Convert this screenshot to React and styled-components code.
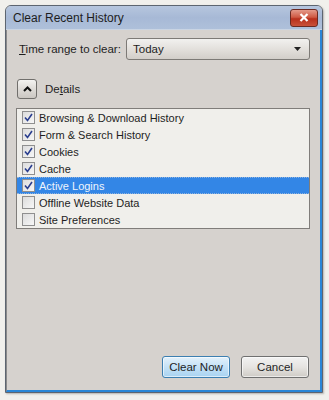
import styled, { createGlobalStyle } from "styled-components";

const GlobalStyle = createGlobalStyle`
  html, body {
    margin: 0;
    padding: 0;
    background: #f1f0ec;
  }
  body {
    font-family: "Liberation Sans", Arial, sans-serif;
    font-size: 12px;
    color: #1e1e1e;
  }
`;

const Page = styled.div`
  width: 329px;
  height: 400px;
  padding: 5px 6px 7px 5px;
  box-sizing: border-box;
  display: flex;
`;

const Window = styled.div`
  flex: 1;
  display: flex;
  flex-direction: column;
  border: 1px solid #5d6570;
  border-radius: 6px 6px 0 0;
  overflow: hidden;
  background: #d6d2ce;
  box-shadow: 1px 1px 2px rgba(0, 0, 0, 0.25);
`;

const TitleBar = styled.div`
  height: 23px;
  display: flex;
  align-items: center;
  justify-content: space-between;
  padding: 0 4px 0 7px;
  background: linear-gradient(#b6c6de, #a7b9d6 50%, #aec0da);
  border-bottom: 1px solid #c9d4e3;
`;

const Title = styled.span`
  font-size: 12px;
  color: #1d1d1d;
`;

const CloseButton = styled.div`
  width: 26px;
  height: 16px;
  border-radius: 3px;
  border: 1px solid #6b2a22;
  background: linear-gradient(#e49a8a, #cf5a44 45%, #b8301c 55%, #c9513a);
  display: flex;
  align-items: center;
  justify-content: center;
`;

const Body = styled.div`
  flex: 1;
  display: flex;
  flex-direction: column;
  padding: 8px 10px 12px 9px;
  border-right: 2px solid #2a86d6;
  border-bottom: 2px solid #2a86d6;
  border-left: 1px solid #8a8a8a;
`;

const RangeRow = styled.div`
  display: flex;
  align-items: center;
  padding-left: 3px;
`;

const Label = styled.span`
  font-size: 11.5px;
  white-space: nowrap;
`;

const Select = styled.div`
  width: 184px;
  height: 22px;
  box-sizing: border-box;
  border: 1px solid #7d7a76;
  border-radius: 3px;
  background: linear-gradient(#f2f1ef, #e3e0dc 50%, #d2cec9);
  display: flex;
  align-items: center;
  justify-content: space-between;
  padding: 0 8px 0 6px;
  margin-left: auto;
  font-size: 11.5px;
`;

const DetailsRow = styled.div`
  display: flex;
  align-items: center;
  gap: 8px;
  margin-top: 19px;
  padding-left: 1px;
`;

const ToggleButton = styled.div`
  width: 20px;
  height: 20px;
  box-sizing: border-box;
  border: 1px solid #716f6c;
  border-radius: 3px;
  background: linear-gradient(#f4f3f1, #dedbd7 50%, #cbc7c2);
  display: flex;
  align-items: center;
  justify-content: center;
`;

const List = styled.div`
  margin-top: 9px;
  height: 119px;
  border: 1px solid #807d7a;
  background: #f0efeb;
`;

const Row = styled.div`
  height: 17px;
  box-sizing: border-box;
  display: flex;
  align-items: center;
  gap: 4px;
  padding-left: 5px;
  font-size: 11px;
  color: ${(p) => (p.$selected ? "#eef4fc" : "#1e1e1e")};
  background: ${(p) => (p.$selected ? "#3386e6" : "transparent")};
  border-top: 1px dotted ${(p) => (p.$selected ? "#8fb2dc" : "transparent")};
  border-bottom: 1px dotted ${(p) => (p.$selected ? "#8fb2dc" : "transparent")};
`;

const Box = styled.div`
  width: 13px;
  height: 13px;
  box-sizing: border-box;
  border: 1px solid #8f8f8f;
  background: linear-gradient(135deg, #dcdcdc, #f7f7f7);
  display: flex;
  align-items: center;
  justify-content: center;
`;

const Footer = styled.div`
  margin-top: auto;
  display: flex;
  justify-content: flex-end;
  gap: 11px;
  padding-right: 1px;
`;

const Button = styled.div`
  width: 68px;
  height: 22px;
  box-sizing: border-box;
  border-radius: 3px;
  border: 1px solid ${(p) => (p.$default ? "#3c7fb1" : "#707070")};
  background: ${(p) =>
    p.$default
      ? "linear-gradient(#e3f1fb, #c4e2f7 50%, #a8d3f1)"
      : "linear-gradient(#f2f2f2, #e6e4e1 50%, #cfcbc6)"};
  box-shadow: inset 0 0 0 1px rgba(255, 255, 255, 0.6);
  display: flex;
  align-items: center;
  justify-content: center;
  font-size: 11.5px;
`;

const U = styled.span`
  text-decoration: underline;
`;

const Check = () => (
  <svg width="9" height="9" viewBox="0 0 9 9">
    <path d="M1 4.5 L3.5 7.5 L8 1" fill="none" stroke="#2b3f8f" strokeWidth="1.6" />
  </svg>
);

const items = [
  { label: "Browsing & Download History", checked: true },
  { label: "Form & Search History", checked: true },
  { label: "Cookies", checked: true },
  { label: "Cache", checked: true },
  { label: "Active Logins", checked: true, selected: true },
  { label: "Offline Website Data", checked: false },
  { label: "Site Preferences", checked: false },
];

const App = () => {
  return (
    <>
      <GlobalStyle />
      <Page>
        <Window>
          <TitleBar>
            <Title>Clear Recent History</Title>
            <CloseButton>
              <svg width="10" height="9" viewBox="0 0 10 9">
                <path d="M1.5 1 L8.5 8 M8.5 1 L1.5 8" stroke="#ffffff" strokeWidth="2.2" />
              </svg>
            </CloseButton>
          </TitleBar>
          <Body>
            <RangeRow>
              <Label>
                <U>T</U>ime range to clear:
              </Label>
              <Select>
                <span>Today</span>
                <svg width="7" height="4" viewBox="0 0 7 4">
                  <path d="M0 0 L7 0 L3.5 4 Z" fill="#222" />
                </svg>
              </Select>
            </RangeRow>
            <DetailsRow>
              <ToggleButton>
                <svg width="9" height="6" viewBox="0 0 9 6">
                  <path d="M1 5 L4.5 1.5 L8 5" fill="none" stroke="#111" strokeWidth="2" />
                </svg>
              </ToggleButton>
              <Label>
                De<U>t</U>ails
              </Label>
            </DetailsRow>
            <List>
              {items.map((item) => (
                <Row key={item.label} $selected={item.selected}>
                  <Box>{item.checked && <Check />}</Box>
                  <span>{item.label}</span>
                </Row>
              ))}
            </List>
            <Footer>
              <Button $default>Clear Now</Button>
              <Button>Cancel</Button>
            </Footer>
          </Body>
        </Window>
      </Page>
    </>
  );
};

export default App;
